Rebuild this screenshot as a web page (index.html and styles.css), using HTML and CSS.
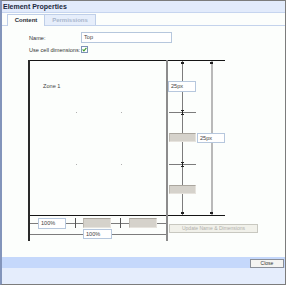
FILE: index.html
```html
<!DOCTYPE html>
<html>
<head>
<meta charset="utf-8">
<link rel="stylesheet" href="styles.css">
</head>
<body>
<div class="window">
  <div class="titlebar">Element Properties</div>
  <div class="tabstrip">
    <div class="tab active">Content</div>
    <div class="tab inactive">Permissions</div>
  </div>
  <div class="content">
    <div class="row">
      <label class="lbl">Name:</label>
      <div class="field name-field">Top</div>
    </div>
    <div class="row row-check">
      <label class="lbl">Use cell dimensions:</label>
      <div class="check">
        <svg width="5" height="5" viewBox="0 0 5 5"><path d="M0.6 2.4 L1.9 3.8 L4.4 0.8" fill="none" stroke="#3d9a2c" stroke-width="1.1"/></svg>
      </div>
    </div>
    <div class="diagram">
      <div class="ln zone-top"></div>
      <div class="ln zone-bottom"></div>
      <div class="ln zone-left"></div>
      <div class="ln zone-right"></div>
      <div class="zone-label">Zone 1</div>
      <div class="dot" style="left:48px;top:52px"></div>
      <div class="dot" style="left:93px;top:52px"></div>
      <div class="dot" style="left:48px;top:104px"></div>
      <div class="dot" style="left:93px;top:104px"></div>

      <div class="ln vline-a"></div>
      <div class="ln vline-b"></div>
      <div class="tick tick-a-top"></div>
      <div class="tick tick-a-bot"></div>
      <div class="tick tick-b-top"></div>
      <div class="tick tick-b-bot"></div>

      <div class="field dim dim-h1">25px</div>
      <div class="ln hline hline1"></div>
      <div class="ibeam ibeam1"></div>
      <div class="handle handle-v1"></div>
      <div class="field dim dim-h2">25px</div>
      <div class="ln hline hline2"></div>
      <div class="ibeam ibeam2"></div>
      <div class="handle handle-v2"></div>

      <div class="ln row-line1"></div>
      <div class="field dim dim-w1">100%</div>
      <div class="ln vtick vtick1"></div>
      <div class="handle handle-h1"></div>
      <div class="ln vtick vtick2"></div>
      <div class="handle handle-h2"></div>
      <div class="ln row-line2"></div>
      <div class="field dim dim-w2">100%</div>

      <div class="btn update-btn">Update Name &amp; Dimensions</div>
    </div>
  </div>
  <div class="footer">
    <div class="btn close-btn">Close</div>
  </div>
  <div class="footer-base"></div>
</div>
</body>
</html>
```
FILE: styles.css
```css
html, body {
  margin: 0;
  padding: 0;
  background: #ffffff;
}
.window {
  width: 286px;
  height: 285px;
  box-sizing: border-box;
  border: 1px solid #7c7c7c;
  border-left: 2px solid #8395bb;
  display: flex;
  flex-direction: column;
  font-family: "Liberation Sans", Arial, sans-serif;
  background: #fcfefc;
  overflow: hidden;
}
.titlebar {
  height: 11px;
  border-bottom: 1px solid #c6d5ef;
  background: #e2ebfb;
  font-size: 7px;
  font-weight: bold;
  line-height: 11px;
  color: #1c2940;
  padding-left: 1px;
  white-space: nowrap;
}
.tabstrip {
  height: 12px;
  border-bottom: 1px solid #c4d3ec;
  display: flex;
  align-items: flex-end;
  padding-left: 5px;
  background: #fcfefc;
}
.tab {
  height: 11px;
  box-sizing: border-box;
  font-size: 6px;
  font-weight: bold;
  line-height: 10px;
  text-align: center;
  border: 1px solid #bfcfe8;
  border-bottom: none;
}
.tab.active {
  width: 38px;
  color: #2a2f3a;
  background: #fcfefc;
  height: 12px;
  margin-bottom: -1px;
  line-height: 11px;
}
.tab.inactive {
  width: 51px;
  color: #a9b6cb;
  background: #e6eefb;
  border-left: none;
}
.content {
  flex: 1;
  padding-top: 6px;
  padding-left: 27px;
  display: flex;
  flex-direction: column;
}
.row {
  display: flex;
  align-items: center;
  height: 11px;
}
.row-check {
  margin-top: 3px;
  height: 7px;
}
.lbl {
  width: 52px;
  font-size: 5.6px;
  color: #333;
  white-space: nowrap;
}
.field {
  box-sizing: border-box;
  border: 1px solid #b6c7dd;
  background: #fff;
  font-size: 5.6px;
  color: #444;
  padding-left: 2px;
  white-space: nowrap;
  overflow: hidden;
}
.name-field {
  width: 91px;
  height: 11px;
  line-height: 9px;
}
.check {
  width: 7px;
  height: 7px;
  box-sizing: border-box;
  border: 1px solid #7d92b6;
  background: #fff;
  display: flex;
  align-items: center;
  justify-content: center;
}
.check svg { display: block; }
.diagram {
  position: relative;
  margin-top: 7px;
  margin-left: -1px;
  width: 232px;
  height: 181px;
}
.ln, .dot, .tick, .ibeam, .handle, .dim, .btn.update-btn, .zone-label {
  position: absolute;
}
.zone-top { left: 0; top: 0; width: 197px; height: 1px; background: #151515; }
.zone-bottom { left: 0; top: 155px; width: 197px; height: 1px; background: #151515; }
.zone-left { left: 0; top: 0; width: 2px; height: 181px; background: #2a2a2a; }
.zone-right { left: 138px; top: 0; width: 2px; height: 181px; background: #8c8c8c; }
.zone-label {
  left: 15px;
  top: 23px;
  font-size: 5.6px;
  color: #444;
}
.dot { width: 1px; height: 1px; background: #b0b0b0; }
.vline-a { left: 154px; top: 1px; width: 1px; height: 154px; background: #7c7c7c; }
.vline-b { left: 183px; top: 1px; width: 2px; height: 154px; background: #b9b9b9; }
.tick { width: 3px; height: 2px; background: #222; }
.tick-a-top { left: 153px; top: 2px; }
.tick-a-bot { left: 153px; top: 152px; }
.tick-b-top { left: 182px; top: 2px; }
.tick-b-bot { left: 182px; top: 152px; }
.dim { height: 11px; line-height: 9px; width: 28px; }
.dim-h1 { left: 140px; top: 21px; }
.dim-h2 { left: 169px; top: 73px; height: 10px; line-height: 8px; }
.dim-w1 { left: 10px; top: 158px; }
.dim-w2 { left: 55px; top: 169px; height: 10px; line-height: 8px; width: 29px; }
.hline { left: 141px; width: 27px; height: 1px; background: #7c7c7c; }
.hline1 { top: 52px; }
.hline2 { top: 104px; }
.ibeam {
  left: 153px;
  width: 3px;
  height: 5px;
  box-sizing: border-box;
  border-top: 1px solid #222;
  border-bottom: 1px solid #222;
}
.ibeam::after {
  content: "";
  position: absolute;
  left: 1px;
  top: 0;
  width: 1px;
  height: 3px;
  background: #222;
}
.ibeam1 { top: 50px; }
.ibeam2 { top: 102px; }
.handle {
  box-sizing: border-box;
  background: #d5d2cb;
  border-top: 1px solid #aaa69e;
  border-left: 1px solid #bdb9b1;
  border-right: 1px solid #e6e3dd;
  border-bottom: 1px solid #e6e3dd;
}
.handle-v1 { left: 141px; top: 73px; width: 27px; height: 9px; }
.handle-v2 { left: 141px; top: 125px; width: 27px; height: 9px; }
.handle-h1 { left: 55px; top: 158px; width: 28px; height: 10px; }
.handle-h2 { left: 101px; top: 158px; width: 28px; height: 10px; }
.row-line1 { left: 2px; top: 163px; width: 136px; height: 1px; background: #7c7c7c; }
.row-line2 { left: 2px; top: 174px; width: 136px; height: 1px; background: #7c7c7c; }
.vtick { top: 158px; width: 1px; height: 10px; background: #555; }
.vtick1 { left: 47px; }
.vtick2 { left: 92px; }
.btn {
  box-sizing: border-box;
  border: 1px solid #c8c8c0;
  background: #f1f1ea;
  font-size: 5px;
  text-align: center;
  white-space: nowrap;
}
.update-btn {
  left: 141px;
  top: 164px;
  width: 89px;
  height: 9px;
  line-height: 7px;
  color: #b0b0aa;
}
.footer {
  height: 11px;
  background: #c5d8fb;
  display: flex;
  justify-content: flex-end;
  align-items: flex-start;
  padding-right: 1px;
}
.close-btn {
  margin-top: 2px;
  width: 34px;
  height: 9px;
  line-height: 7px;
  color: #333;
  border-color: #8a8f99;
  background: #f4f4f2;
}
.footer-base {
  height: 16px;
  background: #e5edfc;
}
```
